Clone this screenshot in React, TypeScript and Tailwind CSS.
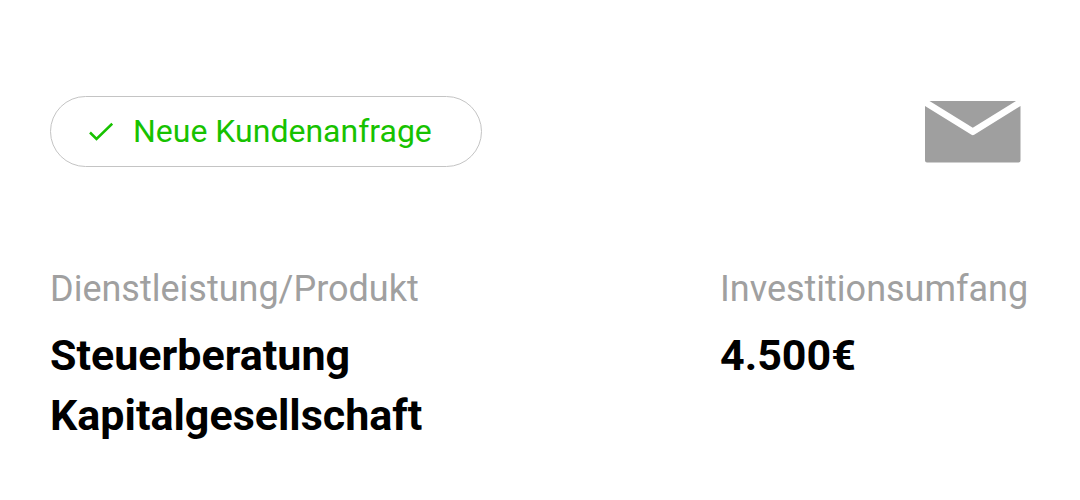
function CheckIcon() {
  return (
    <svg className="size-6 shrink-0" viewBox="0 0 24 24" fill="none" stroke="currentColor" strokeWidth={2.5} aria-hidden="true">
      <path d="M1 13.500L7.500 20L23.200 4.700" />
    </svg>
  )
}

function MailIcon() {
  return (
    <svg className="w-24 h-[62px]" viewBox="0 0 96 62" fill="#9f9f9f" aria-hidden="true">
      <path d="M4.500 0H91L47.800 26.800Z" />
      <path d="M0 5L46.500 33.800Q47.800 34.500 49.200 33.800L95.500 5V59.500Q95.500 61.500 93.500 61.500H2Q0 61.500 0 59.500Z" />
    </svg>
  )
}

export default function App() {
  return (
    <main className="bg-white px-[50px] pt-24 pb-12 font-['Roboto',sans-serif] text-black">
      <header className="flex items-center justify-between">
        <div className="flex h-[71px] w-[432px] items-center gap-5 rounded-full border border-[#c4c4c4] pb-[2px] pl-[38px] text-[32px] leading-10 text-[#17c200]">
          <CheckIcon />
          <span>Neue Kundenanfrage</span>
        </div>
        <div className="mr-[9px]">
          <MailIcon />
        </div>
      </header>
      <dl className="mt-[98px] flex justify-between">
        <div>
          <dt className="text-[36px] leading-12 text-[#a0a0a0]">Dienstleistung/Produkt</dt>
          <dd className="mt-3 text-[43px] leading-[60px] font-bold">
            Steuerberatung
            <br />
            Kapitalgesellschaft
          </dd>
        </div>
        <div className="min-w-[310px]">
          <dt className="text-[36px] leading-12 text-[#a0a0a0]">Investitionsumfang</dt>
          <dd className="mt-3 text-[43px] leading-[60px] font-bold">4.500€</dd>
        </div>
      </dl>
    </main>
  )
}
